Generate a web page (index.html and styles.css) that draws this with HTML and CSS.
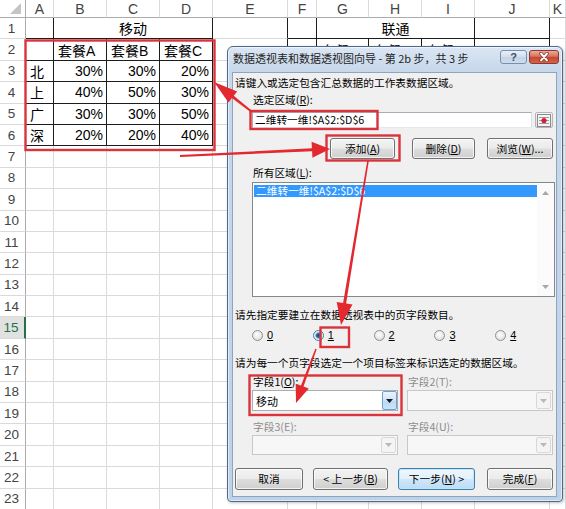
FILE: index.html
```html
<!DOCTYPE html>
<html lang="zh-CN">
<head>
<meta charset="utf-8">
<title>数据透视表和数据透视图向导</title>
<link rel="stylesheet" href="styles.css">
</head>
<body>
<div class="sheet">
  <div class="corner"><svg width="12" height="12" viewBox="0 0 12 12"><polygon points="11,0 11,11 0,11" fill="#c4c4c4"/></svg></div>
  <div class="ch">A</div><div class="ch">B</div><div class="ch">C</div><div class="ch">D</div><div class="ch">E</div><div class="ch">F</div><div class="ch">G</div><div class="ch">H</div><div class="ch">I</div><div class="ch">J</div><div class="ch">K</div>

  <div class="rh">1</div><div class="dR dB"></div><div class="m3 ctr dR dB">移动</div><div class="dR"></div><div class="dR dB"></div><div class="m3 ctr dR dB">联通</div><div class="dR dB"></div><div></div>

  <div class="rh">2</div><div class="dR dB"></div><div class="dR dB">套餐A</div><div class="dR dB">套餐B</div><div class="dR dB">套餐C</div><div class="dR"></div><div class="dR dB"></div><div class="dR dB">套餐A</div><div class="dR dB">套餐B</div><div class="dR dB">套餐C</div><div class="dR dB"></div><div></div>

  <div class="rh">3</div><div class="dR dB">北</div><div class="dR dB num">30%</div><div class="dR dB num">30%</div><div class="dR dB num">20%</div><div class="dR"></div><div class="dR dB"></div><div class="dR dB"></div><div class="dR dB"></div><div class="dR dB"></div><div class="dR dB"></div><div></div>

  <div class="rh">4</div><div class="dR dB">上</div><div class="dR dB num">40%</div><div class="dR dB num">50%</div><div class="dR dB num">30%</div><div class="dR"></div><div class="dR dB"></div><div class="dR dB"></div><div class="dR dB"></div><div class="dR dB"></div><div class="dR dB"></div><div></div>

  <div class="rh">5</div><div class="dR dB">广</div><div class="dR dB num">30%</div><div class="dR dB num">30%</div><div class="dR dB num">50%</div><div class="dR"></div><div class="dR dB"></div><div class="dR dB"></div><div class="dR dB"></div><div class="dR dB"></div><div class="dR dB"></div><div></div>

  <div class="rh">6</div><div class="dR dB">深</div><div class="dR dB num">20%</div><div class="dR dB num">20%</div><div class="dR dB num">40%</div><div class="dR"></div><div class="dR dB"></div><div class="dR dB"></div><div class="dR dB"></div><div class="dR dB"></div><div class="dR dB"></div><div></div>

  <div class="rh">7</div><div></div><div></div><div></div><div></div><div></div><div></div><div></div><div></div><div></div><div></div><div></div>
  <div class="rh">8</div><div></div><div></div><div></div><div></div><div></div><div></div><div></div><div></div><div></div><div></div><div></div>
  <div class="rh">9</div><div></div><div></div><div></div><div></div><div></div><div></div><div></div><div></div><div></div><div></div><div></div>
  <div class="rh">10</div><div></div><div></div><div></div><div></div><div></div><div></div><div></div><div></div><div></div><div></div><div></div>
  <div class="rh">11</div><div></div><div></div><div></div><div></div><div></div><div></div><div></div><div></div><div></div><div></div><div></div>
  <div class="rh">12</div><div></div><div></div><div></div><div></div><div></div><div></div><div></div><div></div><div></div><div></div><div></div>
  <div class="rh">13</div><div></div><div></div><div></div><div></div><div></div><div></div><div></div><div></div><div></div><div></div><div></div>
  <div class="rh">14</div><div></div><div></div><div></div><div></div><div></div><div></div><div></div><div></div><div></div><div></div><div></div>
  <div class="rh sel">15</div><div></div><div></div><div></div><div></div><div></div><div></div><div></div><div></div><div></div><div></div><div></div>
  <div class="rh">16</div><div></div><div></div><div></div><div></div><div></div><div></div><div></div><div></div><div></div><div></div><div></div>
  <div class="rh">17</div><div></div><div></div><div></div><div></div><div></div><div></div><div></div><div></div><div></div><div></div><div></div>
  <div class="rh">18</div><div></div><div></div><div></div><div></div><div></div><div></div><div></div><div></div><div></div><div></div><div></div>
  <div class="rh">19</div><div></div><div></div><div></div><div></div><div></div><div></div><div></div><div></div><div></div><div></div><div></div>
  <div class="rh">20</div><div></div><div></div><div></div><div></div><div></div><div></div><div></div><div></div><div></div><div></div><div></div>
  <div class="rh">21</div><div></div><div></div><div></div><div></div><div></div><div></div><div></div><div></div><div></div><div></div><div></div>
  <div class="rh">22</div><div></div><div></div><div></div><div></div><div></div><div></div><div></div><div></div><div></div><div></div><div></div>
  <div class="rh">23</div><div></div><div></div><div></div><div></div><div></div><div></div><div></div><div></div><div></div><div></div><div></div>
</div>

<div class="dlg">
  <div class="titlebar">
    <span class="title">数据透视表和数据透视图向导 - 第 2b 步，共 3 步</span>
    <span class="tbtn help">?</span>
    <span class="tbtn close"><svg width="12" height="10" viewBox="0 0 12 10"><path d="M3 1.5 L9 8.5 M9 1.5 L3 8.5" stroke="#7a2016" stroke-width="3.4" stroke-linecap="round"/><path d="M3 1.5 L9 8.5 M9 1.5 L3 8.5" stroke="#fff" stroke-width="2" stroke-linecap="round"/></svg></span>
  </div>
  <div class="client">
    <div class="lbl l1">请键入或选定包含汇总数据的工作表数据区域。</div>
    <div class="lbl ind l2">选定区域(<u>R</u>):</div>
    <div class="refrow">
      <div class="edit">二维转一维!$A$2:$D$6</div>
      <span class="refbtn"><svg width="14" height="13" viewBox="0 0 14 13"><rect x="0.5" y="0.5" width="13" height="12" fill="#f4f4f4" stroke="#8a8a8a"/><path d="M2 3.5H12M2 6.5H12M2 9.5H12" stroke="#9a9aa8" stroke-width="1"/><circle cx="7" cy="6.5" r="2.6" fill="#d3202a"/></svg></span>
    </div>
    <div class="btnrow1">
      <span class="btn b-add">添加(<u>A</u>)</span>
      <span class="btn b-del">删除(<u>D</u>)</span>
      <span class="btn b-brw">浏览(<u>W</u>)...</span>
    </div>
    <div class="lbl ind l3">所有区域(<u>L</u>):</div>
    <div class="list">
      <div class="items"><div class="selitem">二维转一维!$A$2:$D$6</div></div>
      <div class="vscroll">
        <svg width="7" height="4" viewBox="0 0 7 4"><polygon points="0,4 3.5,0 7,4" fill="#a8a8a8"/></svg>
        <svg width="7" height="4" viewBox="0 0 7 4"><polygon points="0,0 7,0 3.5,4" fill="#a8a8a8"/></svg>
      </div>
    </div>
    <div class="lbl l4">请先指定要建立在数据透视表中的页字段数目。</div>
    <div class="radios">
      <span class="radio"><span class="rc"></span><u>0</u></span>
      <span class="radio"><span class="rc on"></span><u>1</u></span>
      <span class="radio"><span class="rc"></span><u>2</u></span>
      <span class="radio"><span class="rc"></span><u>3</u></span>
      <span class="radio"><span class="rc"></span><u>4</u></span>
    </div>
    <div class="lbl l5">请为每一个页字段选定一个项目标签来标识选定的数据区域。</div>
    <div class="fields">
      <div class="fcol c1">
        <div class="flbl">字段1(<u>O</u>):</div>
        <div class="combo act"><span class="val">移动</span><span class="dd"><svg width="7" height="4" viewBox="0 0 7 4"><polygon points="0,0 7,0 3.5,4" fill="#1a1a1a"/></svg></span></div>
        <div class="flbl dis f2">字段3(E):</div>
        <div class="combo dis short"><span class="val"></span><span class="dd"><svg width="7" height="4" viewBox="0 0 7 4"><polygon points="0,0 7,0 3.5,4" fill="#b8b8b8"/></svg></span></div>
      </div>
      <div class="fcol c2">
        <div class="flbl dis">字段2(T):</div>
        <div class="combo dis"><span class="val"></span><span class="dd"><svg width="7" height="4" viewBox="0 0 7 4"><polygon points="0,0 7,0 3.5,4" fill="#b8b8b8"/></svg></span></div>
        <div class="flbl dis f2">字段4(U):</div>
        <div class="combo dis short"><span class="val"></span><span class="dd"><svg width="7" height="4" viewBox="0 0 7 4"><polygon points="0,0 7,0 3.5,4" fill="#b8b8b8"/></svg></span></div>
      </div>
    </div>
    <div class="btnrow2">
      <span class="btn b-cancel">取消</span>
      <span class="btn b-prev">&lt; 上一步(<u>B</u>)</span>
      <span class="btn def b-next">下一步(<u>N</u>) &gt;</span>
      <span class="btn b-fin">完成(<u>F</u>)</span>
    </div>
  </div>
</div>

<svg class="overlay" width="566" height="509" viewBox="0 0 566 509">
  <g fill="none" stroke="#d9343c" stroke-width="2.4">
    <rect x="25.5" y="40.5" width="189" height="109.5"/>
    <rect x="250.5" y="111" width="127" height="18"/>
    <rect x="326.5" y="135.5" width="73" height="25"/>
    <rect x="320.5" y="327.5" width="28.5" height="19.5"/>
    <rect x="249.5" y="375.5" width="152" height="39.5"/>
  </g>
  <g fill="#e4282f">
    <polygon points="252.6,111.2 233.7,95.7 237.2,91.4 214,82 228.5,102.4 231.9,98.1 251.4,112.8"/>
    <polygon points="180,157 312.1,151.3 312.4,157.8 330,149 311.6,141.8 311.9,148.3 180,155"/>
    <polygon points="367.2,160.9 343.1,303.1 336.7,302 341,325 352.5,304.6 346.1,303.5 368.8,161.1"/>
    <polygon points="315.3,348.8 301,385.6 295.7,383.7 296,403 308.8,388.5 303.5,386.6 316.7,349.2"/>
  </g>
</svg>
</body>
</html>
```

FILE: styles.css
```css
* { box-sizing: border-box; margin: 0; padding: 0; }
html, body { width: 566px; height: 509px; overflow: hidden; }
body {
  position: relative;
  background: #fff;
  font-family: "Liberation Sans", "Noto Sans CJK SC", sans-serif;
  color: #000;
}

/* ---------- spreadsheet ---------- */
.sheet {
  display: grid;
  grid-template-columns: 26px 28px 53px 53px 53px 75px 29px 52px 53px 53px 75px 16px;
  grid-template-rows: 18px repeat(23, 21.4px);
}
.sheet > div {
  border-right: 1px solid #dadada;
  border-bottom: 1px solid #dadada;
  font-size: 14px;
  display: flex;
  align-items: center;
  padding: 0 4px;
  white-space: nowrap;
  overflow: hidden;
}
.sheet > div.corner {
  justify-content: flex-end;
  align-items: flex-end;
  padding: 0 3px 2px 0;
  border-bottom-color: #ababab;
  border-right-color: #ababab;
}
.sheet > div.ch {
  justify-content: center;
  color: #444;
  font-size: 14px;
  border-bottom-color: #ababab;
  border-right-color: #dadada;
}
.sheet > div.rh {
  justify-content: center;
  color: #444;
  font-size: 13.5px;
  padding: 0 2px 0 0;
  border-right-color: #ababab;
  border-bottom-color: #dadada;
}
.sheet > div.rh.sel {
  background: #e1e1e1;
  color: #217346;
  border-right: 2px solid #217346;
}
.sheet > div.dR { border-right-color: #1c1c1c; }
.sheet > div.dB { border-bottom-color: #1c1c1c; }
.sheet > div.m3 { grid-column: span 3; }
.sheet > div.ctr { justify-content: center; }
.sheet > div.num { justify-content: flex-end; padding-right: 3px; }

/* ---------- dialog ---------- */
.dlg {
  position: absolute;
  left: 227px;
  top: 46px;
  width: 336px;
  height: 456px;
  border: 1px solid #4f6a89;
  border-radius: 6px 6px 4px 4px;
  background: linear-gradient(#dbe6f3, #c7d8eb 24px, #bdd1e8 100%);
  box-shadow: inset 0 0 0 1px rgba(255,255,255,0.55), 1px 1px 3px rgba(0,0,0,0.25);
  padding: 0 5px 4px 4px;
  display: flex;
  flex-direction: column;
  font-family: "Noto Sans CJK SC", sans-serif;
  font-size: 10.7px;
  line-height: 12px;
  color: #000;
}
.titlebar {
  height: 25px;
  display: flex;
  align-items: flex-start;
  margin-right: -4px;
  padding-right: 2px;
}
.title {
  flex: 1;
  margin-top: 5px;
  padding-left: 1px;
  font-size: 11px;
  color: #1e1e1e;
  white-space: nowrap;
}
.tbtn {
  margin-top: 3px;
  height: 14px;
  border-radius: 3px;
  display: flex;
  align-items: center;
  justify-content: center;
}
.help {
  width: 27px;
  margin-right: 2px;
  border: 1px solid #7990ac;
  background: linear-gradient(#e8f0f8, #d2deec 50%, #c3d3e6 51%, #cfdcec);
  font-family: "Liberation Sans", sans-serif;
  font-weight: bold;
  font-size: 11px;
  color: #3b4f68;
}
.close {
  width: 30px;
  border: 1px solid #8b3a2e;
  background: linear-gradient(#ecaa9c, #d8735f 45%, #c7452f 50%, #d5634c 100%);
}

.client {
  flex: 1;
  background: #f0f0f0;
  border: 1px solid #8fa4bd;
  display: flex;
  flex-direction: column;
}
.lbl { height: 12px; margin-left: 2px; white-space: nowrap; }
.lbl.ind { margin-left: 20px; }
.l1 { margin-top: 4px; }
.l2 { margin-top: 5px; }
.l3 { margin-top: 8px; }
.l4 { margin-top: 12px; }
.l5 { margin-top: 16px; }

.refrow {
  margin: 6px 0 0 19px;
  height: 16px;
  display: flex;
}
.edit {
  width: 280px;
  height: 16px;
  border: 1px solid #abadb3;
  border-bottom-color: #e3e9ef;
  border-right-color: #dbdfe6;
  background: #fff;
  padding-left: 2px;
  display: flex;
  align-items: center;
  white-space: nowrap;
}
.refbtn {
  width: 18px;
  height: 16px;
  margin-left: 3px;
  display: flex;
  align-items: center;
  justify-content: center;
  border: 1px solid #b5b5b5;
  border-radius: 2px;
  background: linear-gradient(#f6f6f6, #e2e2e2);
}

.btn {
  height: 100%;
  display: flex;
  align-items: center;
  justify-content: center;
  border: 1px solid #707070;
  border-radius: 3px;
  background: linear-gradient(#f3f3f3 0%, #ebebeb 48%, #dddddd 52%, #cfcfcf 100%);
  box-shadow: inset 0 0 0 1px rgba(255,255,255,0.75);
  white-space: nowrap;
}
.btn.def {
  border-color: #3c7fb1;
  background: linear-gradient(#eef7fd 0%, #e3f1fb 48%, #cfe7f9 52%, #bcdcf4 100%);
  box-shadow: inset 0 0 0 1px #c4e4f8;
}
.btnrow1 {
  margin: 10px 0 0 97px;
  height: 21px;
  display: flex;
}
.b-add { width: 65px; }
.b-del { width: 63px; margin-left: 17px; }
.b-brw { width: 66px; margin-left: 12px; }

.list {
  margin: 3px 0 0 19px;
  width: 303px;
  height: 115px;
  border: 1px solid #828790;
  background: #fff;
  display: flex;
}
.items { flex: 1; padding: 2px 0 0 1px; }
.selitem {
  height: 12px;
  background: #3399ff;
  color: #fff;
  padding-left: 2px;
  line-height: 12px;
  white-space: nowrap;
}
.vscroll {
  width: 17px;
  display: flex;
  flex-direction: column;
  justify-content: space-between;
  align-items: center;
  padding: 8px 0 7px;
  background: #fbfbfb;
}

.radios {
  margin: 8px 0 0 19px;
  height: 12px;
  display: flex;
}
.radio {
  width: 70px;
  display: flex;
  align-items: center;
  font-family: "Liberation Sans", sans-serif;
  font-size: 11px;
}
.rc {
  width: 11px;
  height: 11px;
  margin-right: 4px;
  border-radius: 50%;
  border: 1px solid #8f8f8f;
  background: radial-gradient(circle at 45% 40%, #ffffff 0, #e6e6e6 60%, #d4d4d4 100%);
}
.rc.on {
  background: radial-gradient(circle at 50% 50%, #17476f 0, #2b6fa3 2px, #7cc0ea 3px, #e9f4fb 3.6px, #dcdcdc 100%);
  border-color: #4a7aa5;
}

.fields {
  margin: 7px 0 0 19px;
  display: flex;
}
.fcol { display: flex; flex-direction: column; }
.fcol.c1 { width: 155px; }
.fcol.c2 { width: 146px; }
.flbl { height: 12px; margin-left: 1px; white-space: nowrap; }
.flbl.dis { color: #8d8d8d; }
.flbl.f2 { margin-top: 10px; }
.combo {
  margin-top: 2px;
  height: 21px;
  border: 1px solid #abadb3;
  background: #fff;
  display: flex;
}
.c1 .combo { width: 146px; }
.c2 .combo { width: 146px; }
.combo.short { height: 20px; }
.combo .val {
  flex: 1;
  padding-left: 3px;
  display: flex;
  align-items: center;
  font-size: 11px;
}
.combo .dd {
  width: 15px;
  display: flex;
  align-items: center;
  justify-content: center;
}
.combo.act .dd {
  border: 1px solid #6fa3cf;
  border-radius: 2px;
  background: linear-gradient(#e9f4fc, #cfe5f7 50%, #b9daf4 51%, #c9e3f8);
}
.combo.dis {
  border-color: #c8c8c8;
  background: #f7f7f7;
}
.combo.dis .dd {
  margin: 1px;
  border: 1px solid #d8d8d8;
  border-radius: 2px;
  background: #f4f4f4;
}

.btnrow2 {
  margin: 13px 0 0 2px;
  height: 22px;
  display: flex;
}
.b-cancel { width: 68px; }
.b-prev { width: 75px; margin-left: 10px; }
.b-next { width: 77px; margin-left: 10px; }
.b-fin { width: 66px; margin-left: 12px; }

u { text-decoration: underline; text-underline-offset: 1px; }

/* ---------- annotation overlay ---------- */
.overlay {
  position: absolute;
  left: 0;
  top: 0;
  pointer-events: none;
}
```
